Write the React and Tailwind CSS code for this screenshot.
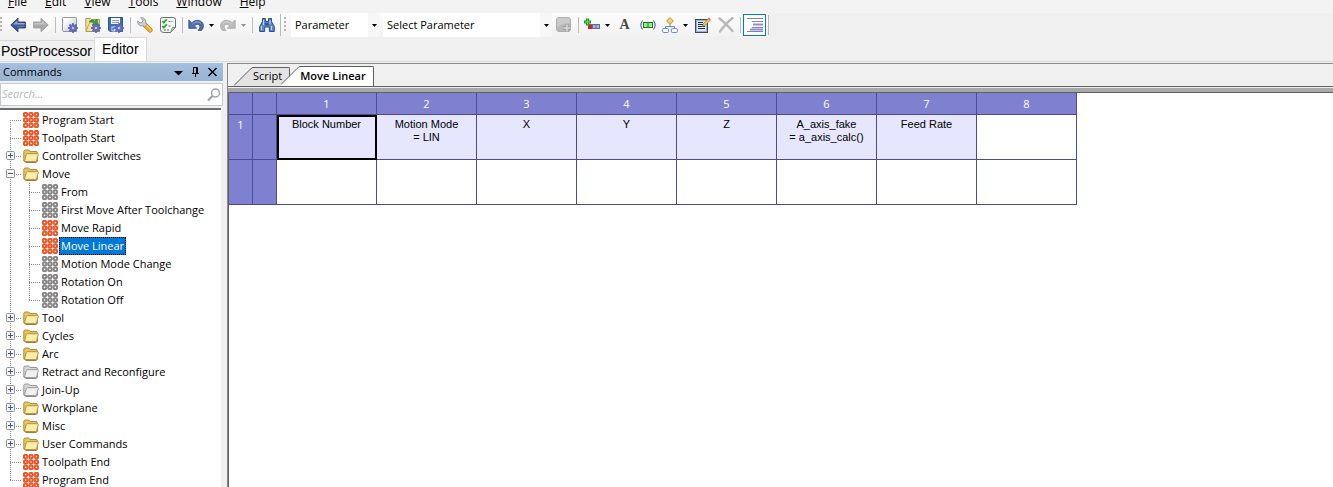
import React, { useState } from "react";

const MENUS = ["File", "Edit", "View", "Tools", "Window", "Help"];

const TREE = [
  { label: "Program Start", icon: "on" },
  { label: "Toolpath Start", icon: "on" },
  { label: "Controller Switches", icon: "folder" },
  {
    label: "Move",
    icon: "folder",
    children: [
      { label: "From", icon: "off" },
      { label: "First Move After Toolchange", icon: "off" },
      { label: "Move Rapid", icon: "on" },
      { label: "Move Linear", icon: "on" },
      { label: "Motion Mode Change", icon: "off" },
      { label: "Rotation On", icon: "off" },
      { label: "Rotation Off", icon: "off" },
    ],
  },
  { label: "Tool", icon: "folder" },
  { label: "Cycles", icon: "folder" },
  { label: "Arc", icon: "folder" },
  { label: "Retract and Reconfigure", icon: "emptyFolder" },
  { label: "Join-Up", icon: "emptyFolder" },
  { label: "Workplane", icon: "folder" },
  { label: "Misc", icon: "folder" },
  { label: "User Commands", icon: "folder" },
  { label: "Toolpath End", icon: "on" },
  { label: "Program End", icon: "on" },
];

const CELLS = [
  ["Block Number"],
  ["Motion Mode", "= LIN"],
  ["X"],
  ["Y"],
  ["Z"],
  ["A_axis_fake", "= a_axis_calc()"],
  ["Feed Rate"],
  [],
];

/* ---------- icons ---------- */

function Icon({ children }) {
  return (
    <svg width="16" height="16" viewBox="0 0 16 16" fill="none" aria-hidden="true" className="shrink-0">
      {children}
    </svg>
  );
}

function Gear() {
  return (
    <g>
      <path d="M11 6.200v9.600M6.200 11h9.600M7.600 7.600l6.800 6.800M14.400 7.600l-6.800 6.800" stroke="#5259b0" strokeWidth="2" />
      <circle cx="11" cy="11" r="3.600" fill="#646cc8" />
      <circle cx="11" cy="11" r="1.100" fill="#dfe1f8" />
    </g>
  );
}

const BackIcon = () => (
  <Icon>
    <path d="M.8 8 8 1.200V5h7.400v6H8v3.800z" fill="#3f5a9c" stroke="#2a3d70" strokeWidth=".9" />
    <path d="M3 7.400 7.200 3.600V6h7.400v1.400z" fill="#8ea6d6" />
    <path d="M7 9.500h7.500" stroke="#5f7cba" />
  </Icon>
);
const ForwardIcon = () => (
  <Icon>
    <path d="M15.200 8 8 1.200V5H.6v6H8v3.800z" fill="#a9a9a9" stroke="#a0a0a0" strokeWidth=".9" />
    <path d="M13 7.400 8.800 3.600V6H1.400v1.400z" fill="#c6c6c6" />
  </Icon>
);
const NewIcon = () => (
  <Icon>
    <defs>
      <linearGradient id="sheet" x1="0" y1="0" x2="1" y2="1">
        <stop offset=".2" stopColor="#fff" />
        <stop offset="1" stopColor="#b9bec5" />
      </linearGradient>
    </defs>
    <rect x=".5" y=".5" width="14" height="14" rx="1" fill="url(#sheet)" stroke="#8f949b" />
    <Gear />
  </Icon>
);
const OpenIcon = () => (
  <Icon>
    <path d="M.8 1.500h4.700l1 1H14.500v12H1z" fill="#f1e2a0" stroke="#b39a4a" />
    <path d="m1 14.500 3.500-9h4" stroke="#c9ac50" />
    <path d="M4 4.500q3-3 5.500-.500L12 2l1.500 6.500-6-1 1.500-1.800Q7 4.800 4 4.500z" fill="#35a63e" stroke="#1f7f2b" strokeWidth=".6" />
    <Gear />
  </Icon>
);
const SaveIcon = () => (
  <Icon>
    <path d="M.5.5h14v14H2L.5 13z" fill="#4271b0" stroke="#2f558e" />
    <rect x="3" y="1" width="9" height="6" fill="#f4f7fa" />
    <path d="M4 3.500h7M4 5.500h7" stroke="#8fa6ae" />
    <rect x="3.500" y="9.500" width="8" height="5" fill="#dde4ec" />
    <path d="M5 10.500v3" stroke="#4271b0" strokeWidth="1.500" />
    <Gear />
  </Icon>
);
const WrenchIcon = () => (
  <Icon>
    <path d="m8.500 8.500 4.600 4.600" stroke="#b8781c" strokeWidth="5" strokeLinecap="round" />
    <path d="m8.500 8.500 4.600 4.600" stroke="#f3ae32" strokeWidth="3.800" strokeLinecap="round" />
    <path d="m8.800 7.800 4.600 4.400" stroke="#fbd990" strokeLinecap="round" />
    <path d="M3.600.8 6 3.200 5.200 5.400 3 6 .7 3.800C.2 7.400 3 9.600 6.200 8.800l1.200 1 2.400-2.400-1-1.200C9.600 3 7 .2 3.600.8z" fill="#cdd1d6" stroke="#848a93" strokeWidth=".8" />
  </Icon>
);
const CheckIcon = () => (
  <Icon>
    <path d="M2.500.5h11q2 0 2 2v8l-5 5h-7q-3 0-3-3v-10q0-2 2-2z" fill="#f1f3f3" stroke="#6a7070" />
    <path d="M15.500 10.500h-3l-2 5z" fill="#c3c8c8" stroke="#6a7070" strokeWidth=".7" />
    <path d="m2.400 4 1.400 1.600 3-3.400M2.400 9l1.400 1.600 3-3.400" stroke="#27a52a" strokeWidth="1.700" />
    <path d="M8.500 4.500h4M8.500 9h3M4 13h5" stroke="#6c7272" strokeDasharray="2 1" />
  </Icon>
);
const UndoIcon = () => (
  <Icon>
    <path d="M.8 3v8.300h8L6.400 8.800c2-2 4.800-1.800 5.400.2.4 1.600-.4 3-1.800 4.400h3.600c2.400-2.700 2.400-6.400.2-8.400C11 2.500 6.600 2.800 3.800 5.900z" fill="#4f70ac" stroke="#2f4a80" strokeWidth=".8" />
    <path d="M4.500 7C7 4.500 11 4.200 13 6.500" stroke="#93aeda" />
  </Icon>
);
const RedoIcon = () => (
  <Icon>
    <path d="M15.200 3v8.300h-8l2.400-2.500c-2-2-4.800-1.800-5.400.2-.4 1.600.4 3 1.800 4.400H2.400C0 10.700 0 7 2.200 5c2.800-2.500 7.200-2.200 10 .9z" fill="#bcbcbc" stroke="#a6a6a6" strokeWidth=".8" />
    <path d="M11.500 7C9 4.500 5 4.200 3 6.500" stroke="#d8d8d8" />
  </Icon>
);
const FindIcon = () => (
  <Icon>
    <path d="M3.500 1.500h3v3h3v-3h3v3l2.800 5v5h-5V10H5.700v4.500h-5v-5l2.800-5z" fill="#5f86c2" stroke="#2b4d88" />
    <path d="M2.500 9v4M4.500 3v5M11 3v4M12.500 9v4" stroke="#c3d6f0" />
    <path d="M6.500 6h3v2.500h-3z" fill="#2b4d88" />
  </Icon>
);
const AddBlockIcon = () => (
  <Icon>
    <rect x=".5" y=".5" width="14" height="14" rx="2.500" fill="#b9b9b9" stroke="#adadad" />
    <path d="M1 3q0-2 2-2h9q2 0 2 2v3Q7 6 1 10z" fill="#cbcbcb" />
    <path d="M11 7v8M7 11h8" stroke="#a0a0a0" strokeWidth="3.400" />
    <path d="M11 7.500v7M7.500 11h7" stroke="#d9d9d9" strokeWidth="1.600" />
  </Icon>
);
const InsertIcon = () => (
  <Icon>
    <rect x="5" y="7.500" width="10.500" height="4" fill="#a9b6da" stroke="#5f6c99" />
    <path d="M8.500 7.500v4M12 7.500v4" stroke="#5f6c99" />
    <rect x="4" y="8" width="4" height="4" fill="#e01c1c" />
    <path d="M3.500 1.500v7M0 5h7" stroke="#1f971f" strokeWidth="3" />
    <path d="M3.500 2.500v5M1 5h5" stroke="#5fe350" />
  </Icon>
);
const TextIcon = () => (
  <span aria-hidden="true" className="font-['Liberation_Serif',serif] text-sm leading-4 font-bold text-[#484848]">
    A
  </span>
);
const BracketIcon = () => (
  <Icon>
    <path d="M2.500 3.500Q-.8 8 2.500 12.500M13.500 3.500q3.300 4.500 0 9" stroke="#53659e" strokeWidth="1.100" />
    <rect x="3.500" y="5.500" width="9" height="5" fill="#8df08a" stroke="#1d7a2b" />
    <path d="M8 5.500v5" stroke="#1d7a2b" />
  </Icon>
);
const FlowIcon = () => (
  <Icon>
    <path d="M8 6v3M3.500 12V9.500h9V12" stroke="#6b85cf" />
    <path d="m8 .6 3.400 3.400L8 7.400 4.600 4z" fill="#f5d565" stroke="#ab8b2c" strokeWidth=".9" />
    <rect x=".6" y="11.500" width="6" height="4" rx="1" fill="#f5f8ff" stroke="#6b85cf" />
    <rect x="9.400" y="11.500" width="6" height="4" rx="1" fill="#f5f8ff" stroke="#6b85cf" />
  </Icon>
);
const EditIcon = () => (
  <Icon>
    <rect x=".5" y="2.500" width="12" height="13" fill="#9fb2cc" stroke="#3b4a63" />
    <rect x="2" y="4" width="9" height="10" fill="#dbe5f0" />
    <path d="M3 5.500h5M3 7.500h5M3 9.500h7M3 11.500h7" stroke="#24324c" />
    <path d="m7.400 9.400 1-2.700 5-5.500 2 1.800-5.200 5.400z" fill="#f0c552" stroke="#8f6c22" strokeWidth=".6" />
    <path d="m12.600 1.800 1.300-1.400 2 1.800-1.300 1.400z" fill="#d4707a" />
  </Icon>
);
const DeleteIcon = () => (
  <Icon>
    <path d="M1.500 1.500c4 3 8 7 13 12.500M14.500 1C10 4.500 6 9 2 14.500" stroke="#b9b9b9" strokeWidth="2.400" strokeLinecap="round" />
  </Icon>
);
const LinesIcon = () => (
  <Icon>
    <path d="M0 1.500h16M5 4.500h11M5 10.500h11M0 14.500h16" stroke="#8c8583" />
    <path d="M6 7.500h10M3 12.500h13" stroke="#8c88f8" strokeWidth="2" />
  </Icon>
);

function Caret({ muted }) {
  return (
    <svg width="5" height="3" viewBox="0 0 5 3" aria-hidden="true">
      <path d="M0 0h5L2.500 3z" fill={muted ? "#909090" : "#000"} />
    </svg>
  );
}

function CircleGrid({ color }) {
  const at = [2.600, 8, 13.400];
  return (
    <Icon>
      {at.map((y) =>
        at.map((x) => <circle key={x + "-" + y} cx={x} cy={y} r="1.800" stroke={color} strokeWidth="2" />)
      )}
    </Icon>
  );
}

function Folder({ empty }) {
  const edge = empty ? "#8a8a8a" : "#a88226";
  const back = empty ? "#d9d9d9" : "#e6c662";
  const front = empty ? "#f0f0f0" : "#fbedaa";
  return (
    <Icon>
      <path d="M.8 13V3.500Q.8 2 2.300 2h3.400l1.300 1.500h6q1.300 0 1.300 1.300V13z" fill={back} stroke={edge} strokeWidth=".9" />
      <path d="M1.400 13.500 3.300 6.500q.2-.8 1-.8h10.400q.8 0 .6.800l-1.700 6q-.3 1-1.200 1z" fill={front} stroke={edge} strokeWidth=".8" />
      <path d="M2.500 14.500H13l1.800-1.500" stroke={empty ? "#707070" : "#7d5f18"} strokeWidth=".8" />
    </Icon>
  );
}

function NodeIcon({ kind }) {
  if (kind === "on") return <CircleGrid color="#ee5526" />;
  if (kind === "off") return <CircleGrid color="#868686" />;
  return <Folder empty={kind === "emptyFolder"} />;
}

/* ---------- toolbar ---------- */

function ToolButton({ label, children, active }) {
  return (
    <button
      type="button"
      aria-label={label}
      aria-pressed={active}
      className={
        active
          ? "flex h-[22px] w-[23px] items-center justify-center border border-[#0078d7] bg-white"
          : "flex h-[22px] w-[23px] items-center justify-center"
      }
    >
      {children}
    </button>
  );
}

function SplitButton({ label, children, muted }) {
  return (
    <div className="flex h-[22px]">
      <button type="button" aria-label={label} className="flex w-[21px] items-center justify-center">
        {children}
      </button>
      <button type="button" aria-label={label + " options"} className="flex w-[11px] items-center justify-center">
        <Caret muted={muted} />
      </button>
    </div>
  );
}

const Separator = () => (
  <div className="flex w-[6px] justify-center">
    <div className="h-4 w-px bg-[#bdbdbd]" />
  </div>
);

const Grip = () => (
  <svg width="2" height="16" viewBox="0 0 2 16" aria-hidden="true">
    <path d="M0 1h2M0 5h2M0 9h2M0 13h2" stroke="#b4b4b4" strokeWidth="2" />
  </svg>
);

function ToolSelect({ label, value, className }) {
  return (
    <div className={"relative flex h-6 bg-white " + className}>
      <select
        aria-label={label}
        className="w-full appearance-none bg-transparent pr-4 pl-1 text-[11px] leading-4 text-black outline-none"
      >
        <option>{value}</option>
      </select>
      <span className="pointer-events-none absolute inset-y-0 right-0 flex w-3 items-center justify-center bg-[#f7f7f7]">
        <Caret />
      </span>
    </div>
  );
}

function Toolbar() {
  return (
    <div className="flex h-6 items-center self-start bg-linear-to-b from-[#fdfdfd] to-[#f1f1f1]">
      <div className="w-[6px]">
        <Grip />
      </div>
      <ToolButton label="Back"><BackIcon /></ToolButton>
      <ToolButton label="Forward"><ForwardIcon /></ToolButton>
      <Separator />
      <ToolButton label="New"><NewIcon /></ToolButton>
      <ToolButton label="Open"><OpenIcon /></ToolButton>
      <ToolButton label="Save"><SaveIcon /></ToolButton>
      <Separator />
      <ToolButton label="Settings"><WrenchIcon /></ToolButton>
      <ToolButton label="Validate"><CheckIcon /></ToolButton>
      <Separator />
      <SplitButton label="Undo"><UndoIcon /></SplitButton>
      <SplitButton label="Redo" muted><RedoIcon /></SplitButton>
      <Separator />
      <ToolButton label="Find"><FindIcon /></ToolButton>
      <div className="flex w-[13px] items-center gap-[3px] pl-[2px]">
        <div className="h-[22px] w-px bg-[#b8b8b8]" />
        <Grip />
      </div>
      <ToolSelect label="Item type" value="Parameter" className="w-[89px]" />
      <div className="w-[3px]" />
      <ToolSelect label="Item" value="Select Parameter" className="w-[169px]" />
      <ToolButton label="Add block"><AddBlockIcon /></ToolButton>
      <Separator />
      <SplitButton label="Insert block"><InsertIcon /></SplitButton>
      <ToolButton label="Text"><TextIcon /></ToolButton>
      <ToolButton label="Group"><BracketIcon /></ToolButton>
      <SplitButton label="Structure"><FlowIcon /></SplitButton>
      <ToolButton label="Edit"><EditIcon /></ToolButton>
      <ToolButton label="Delete"><DeleteIcon /></ToolButton>
      <Separator />
      <ToolButton label="Show lines" active><LinesIcon /></ToolButton>
      <div className="ml-[2px] h-5 w-px bg-[#b8b8b8]" />
    </div>
  );
}

/* ---------- commands tree ---------- */

function Gutter({ first, last, child, lastChild, expander }) {
  const width = child ? 42 : 23;
  const x = child ? 29 : 10;
  return (
    <svg width={width} height="18" viewBox={"0 0 " + width + " 18"} fill="none" aria-hidden="true" className="shrink-0">
      <g stroke="#8f8f8f" strokeDasharray="1 1">
        <path d={first ? "M10.500 9V18" : last ? "M10.500 0V9" : "M10.500 0V18"} />
        {child && <path d={lastChild ? "M29.500 0V9" : "M29.500 0V18"} />}
        <path d={"M" + x + " 9.500H" + (x + 11)} />
      </g>
      {expander && (
        <g>
          <rect x="6.500" y="4.500" width="8" height="8" rx="1" fill="#f6f6f6" stroke="#919191" />
          <path d={expander === "open" ? "M8 8.500h5" : "M8 8.500h5M10.500 6v5"} stroke="#3c55a0" />
        </g>
      )}
    </svg>
  );
}

function TreeRow({ node, selected, onSelect, ...gutter }) {
  return (
    <button type="button" onClick={() => onSelect(node.label)} className="flex h-[18px] items-center whitespace-nowrap">
      <Gutter {...gutter} />
      <NodeIcon kind={node.icon} />
      <span
        className={
          selected
            ? "ml-px h-[18px] border border-dotted border-black bg-[#0078d7] px-px leading-4 text-white"
            : "ml-px h-[18px] border border-transparent px-px leading-4 text-black"
        }
      >
        {node.label}
      </span>
    </button>
  );
}

function CommandsPanel() {
  const [selected, setSelected] = useState("Move Linear");
  return (
    <aside className="flex w-[223px] shrink-0 flex-col">
      <header className="flex h-[18px] shrink-0 items-center bg-linear-to-b from-[#a5c0df] to-[#99b4d1] pr-[6px] pl-[3px] text-[11px] text-black">
        <h2 className="flex-1">Commands</h2>
        <div className="flex items-center gap-2">
          <button type="button" aria-label="Panel menu">
            <svg width="9" height="10" viewBox="0 0 9 10"><path d="M0 4h9L4.500 8.500z" /></svg>
          </button>
          <button type="button" aria-label="Pin panel">
            <svg width="9" height="10" viewBox="0 0 9 10" fill="none" stroke="#000">
              <path d="M2.500 6V.5h4V6M5.500.5V6M1 6.500h7M4.500 6.500V10" />
            </svg>
          </button>
          <button type="button" aria-label="Close panel">
            <svg width="9" height="10" viewBox="0 0 9 10" fill="none" stroke="#000" strokeWidth="1.400">
              <path d="m.5 1 8 8M8.500 1l-8 8" />
            </svg>
          </button>
        </div>
      </header>
      <div className="mt-[2px] flex h-[23px] shrink-0 items-center border border-[#c3cad4] bg-white pr-px">
        <input
          type="text"
          aria-label="Search commands"
          placeholder="Search..."
          className="min-w-0 flex-1 bg-transparent pl-px text-[11px] italic outline-none placeholder:text-[#b5b9c0]"
        />
        <svg width="14" height="14" viewBox="0 0 14 14" fill="none" stroke="#9aa1ae" aria-hidden="true">
          <circle cx="8.500" cy="5" r="4" strokeWidth="1.500" />
          <path d="M5.500 8 1 12.500" strokeWidth="2.200" />
        </svg>
      </div>
      <div className="mt-[2px] mr-[2px] min-h-0 flex-1 overflow-hidden border-t-2 border-[#6e6e6e] bg-white pt-px text-[11px]">
        <ul>
          {TREE.map((node, i) => (
            <li key={node.label}>
              <TreeRow
                node={node}
                selected={selected === node.label}
                onSelect={setSelected}
                first={i === 0}
                last={i === TREE.length - 1}
                expander={node.children ? "open" : node.icon.toLowerCase().includes("folder") ? "closed" : null}
              />
              {node.children && (
                <ul>
                  {node.children.map((item, j) => (
                    <li key={item.label}>
                      <TreeRow
                        node={item}
                        selected={selected === item.label}
                        onSelect={setSelected}
                        child
                        lastChild={j === node.children.length - 1}
                      />
                    </li>
                  ))}
                </ul>
              )}
            </li>
          ))}
        </ul>
      </div>
    </aside>
  );
}

/* ---------- document area ---------- */

function DocumentTab({ label, active }) {
  return (
    <button type="button" role="tab" aria-selected={active} className={active ? "relative -ml-[9px] flex h-5" : "flex h-[19px]"}>
      <svg width="19" height={active ? 20 : 19} viewBox={active ? "0 0 19 20" : "0 0 19 19"} fill="none" aria-hidden="true">
        <path d="M0 20V18.500L16 2.500Q18 .5 19 .5V20z" fill={active ? "#fff" : "#e3e3e3"} />
        <path d="M0 18.500 16 2.500Q18 .5 19 .5" stroke="#5f5f5f" />
      </svg>
      <span
        className={
          active
            ? "h-5 rounded-tr-xs border-t border-r border-[#5f5f5f] bg-white pr-[7px] leading-[18px] font-semibold text-black"
            : "h-[19px] rounded-tr-xs border-t border-r border-[#5f5f5f] bg-[#e3e3e3] pr-[7px] leading-4 text-black"
        }
      >
        {label}
      </span>
    </button>
  );
}

function CommandGrid() {
  return (
    <table className="w-[848px] table-fixed border-separate border-spacing-0 font-['Liberation_Sans',sans-serif] text-[11px] leading-[13px] text-black">
      <colgroup>
        <col className="w-6" />
        <col className="w-6" />
        {CELLS.map((_, i) => (
          <col key={i} className="w-[100px]" />
        ))}
      </colgroup>
      <thead>
        <tr className="h-[22px] bg-[#8080d0] font-['Open_Sans','Noto_Sans',sans-serif] text-white">
          <th className="border-r border-b border-[#4c4c94]" />
          <th className="border-r border-b border-[#4c4c94]" />
          {CELLS.map((_, i) => (
            <th key={i} scope="col" className="border-r border-b border-[#4c4c94] font-normal">
              {i + 1}
            </th>
          ))}
        </tr>
      </thead>
      <tbody>
        <tr className="h-[45px]">
          <th scope="row" className="border-r border-b border-[#4c4c94] bg-[#8080d0] pt-[3px] align-top font-['Open_Sans','Noto_Sans',sans-serif] font-normal text-white">
            1
          </th>
          <td className="border-r border-b border-[#4c4c94] bg-[#8080d0]" />
          {CELLS.map((lines, i) => (
            <td
              key={i}
              className={
                i === 0
                  ? "border-r border-b border-[#4c4c94] bg-[#e6e6ff] pt-[3px] text-center align-top outline-2 -outline-offset-2 outline-black"
                  : lines.length
                    ? "border-r border-b border-[#4c4c94] bg-[#e6e6ff] pt-[3px] text-center align-top"
                    : "border-r border-b border-[#4c4c94] bg-white"
              }
            >
              {lines.map((line) => (
                <div key={line}>{line}</div>
              ))}
            </td>
          ))}
        </tr>
        <tr className="h-[45px]">
          <th className="border-r border-b border-[#4c4c94] bg-[#8080d0]" />
          <td className="border-r border-b border-[#4c4c94] bg-[#8080d0]" />
          {CELLS.map((_, i) => (
            <td key={i} className="border-r border-b border-[#4c4c94] bg-white" />
          ))}
        </tr>
      </tbody>
    </table>
  );
}

export default function App() {
  return (
    <div className="flex h-screen flex-col overflow-hidden bg-[#f0f0f0] font-['Open_Sans','Noto_Sans',sans-serif]">
      <nav className="flex h-[13px] shrink-0 items-end gap-[18px] overflow-hidden bg-[#f3f3f3] pb-[3px] pl-2 text-xs leading-4 text-black">
        {MENUS.map((name) => (
          <button key={name} type="button">
            <span className="underline">{name[0]}</span>
            {name.slice(1)}
          </button>
        ))}
      </nav>
      <Toolbar />
      <div role="tablist" className="flex h-[25px] shrink-0 items-end border-b border-[#d9d9d9] font-['Liberation_Sans',sans-serif] text-sm leading-5 text-black">
        <button type="button" role="tab" aria-selected="false" className="h-[21px] w-[94px] border-t border-[#d9d9d9] pl-px text-left">
          PostProcessor
        </button>
        <button type="button" role="tab" aria-selected="true" className="h-6 border-x border-t border-[#d9d9d9] bg-white px-[7px] pb-px">
          Editor
        </button>
      </div>
      <main className="flex min-h-0 flex-1 pt-px">
        <CommandsPanel />
        <section className="ml-1 flex min-w-0 flex-1 flex-col border-t border-l border-[#8a8a8a]">
          <div role="tablist" className="flex h-[23px] shrink-0 items-end border-b border-[#5f5f5f] pl-[6px] text-[11px]">
            <DocumentTab label="Script" />
            <DocumentTab label="Move Linear" active />
          </div>
          <div className="mt-px h-[5px] shrink-0 border-b border-[#5f5f5f] bg-[#a9a9a9]" />
          <div className="min-h-0 flex-1 overflow-hidden border-l border-[#5f5f5f] bg-white">
            <CommandGrid />
          </div>
        </section>
      </main>
    </div>
  );
}
